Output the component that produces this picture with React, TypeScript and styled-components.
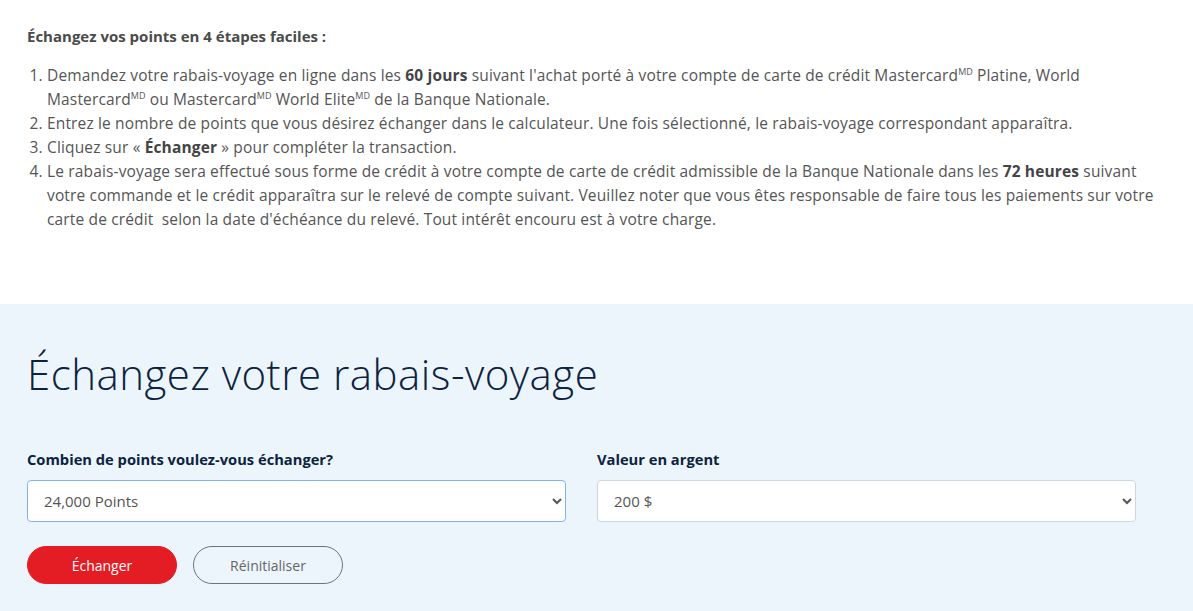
import React from "react";
import styled, { createGlobalStyle } from "styled-components";

const GlobalStyle = createGlobalStyle`
  body {
    margin: 0;
    background: #fff;
    font-family: "Open Sans", "Liberation Sans", sans-serif;
    color: #555;
  }
`;

const Intro = styled.section`
  padding: 26px 27px 73px;
`;

const IntroTitle = styled.h3`
  margin: 0 0 17px;
  font-size: 15px;
  font-weight: 700;
  color: #4a4a4a;
  line-height: 20px;
`;

const Steps = styled.ol`
  margin: 0;
  padding: 0 0 0 20px;
  font-size: 15.5px;
  letter-spacing: 0.15px;
  line-height: 24px;
  color: #555;

  b {
    font-weight: 700;
    color: #444;
  }

  sup {
    font-size: 9px;
    line-height: 0;
    vertical-align: 6px;
    letter-spacing: 0;
  }
`;

const Calculator = styled.section`
  background: #edf5fc;
  padding: 45px 27px 28px;
`;

const Title = styled.h2`
  margin: 0 0 50px;
  font-size: 42px;
  font-weight: 300;
  letter-spacing: 0.5px;
  line-height: 50px;
  color: #0c2340;
`;

const Fields = styled.div`
  display: grid;
  grid-template-columns: 539px 539px;
  column-gap: 31px;
`;

const Field = styled.label`
  display: flex;
  flex-direction: column;
  gap: 11px;
`;

const Label = styled.span`
  font-size: 14.7px;
  font-weight: 700;
  color: #0c2340;
  line-height: 20px;
`;

const Select = styled.select<{ $focused?: boolean }>`
  height: 42px;
  padding: 0 10px 0 12px;
  font-family: inherit;
  font-size: 15px;
  color: #555;
  background: #fff;
  border: 1px solid ${p => (p.$focused ? "#80b3ef" : "#cdd5df")};
  border-radius: 4px;
  outline: none;
`;

const Actions = styled.div`
  display: flex;
  gap: 16px;
  margin-top: 24px;
`;

const Button = styled.button<{ $primary?: boolean }>`
  width: 150px;
  height: 38px;
  border-radius: 19px;
  font-family: inherit;
  font-size: 14px;
  cursor: pointer;
  background: ${p => (p.$primary ? "#e41c23" : "transparent")};
  color: ${p => (p.$primary ? "#fff" : "#666")};
  border: 1px solid ${p => (p.$primary ? "#e41c23" : "#6b7480")};
`;

export default function App() {
  return (
    <>
      <GlobalStyle />
      <Intro>
        <IntroTitle>Échangez vos points en 4 étapes faciles :</IntroTitle>
        <Steps>
          <li>
            Demandez votre rabais-voyage en ligne dans les <b>60 jours</b> suivant l'achat porté à votre compte de carte de crédit Mastercard<sup>MD</sup> Platine, World Mastercard<sup>MD</sup> ou Mastercard<sup>MD</sup> World Elite<sup>MD</sup> de la Banque Nationale.
          </li>
          <li>
            Entrez le nombre de points que vous désirez échanger dans le calculateur. Une fois sélectionné, le rabais-voyage correspondant apparaîtra.
          </li>
          <li>
            Cliquez sur « <b>Échanger</b> » pour compléter la transaction.
          </li>
          <li>
            Le rabais-voyage sera effectué sous forme de crédit à votre compte de carte de crédit admissible de la Banque Nationale dans les <b>72 heures</b> suivant votre commande et le crédit apparaîtra sur le relevé de compte suivant. Veuillez noter que vous êtes responsable de faire tous les paiements sur votre carte de crédit&nbsp; selon la date d'échéance du relevé. Tout intérêt encouru est à votre charge.
          </li>
        </Steps>
      </Intro>
      <Calculator>
        <Title>Échangez votre rabais-voyage</Title>
        <Fields>
          <Field>
            <Label>Combien de points voulez-vous échanger?</Label>
            <Select $focused defaultValue="24000">
              <option value="24000">24,000 Points</option>
            </Select>
          </Field>
          <Field>
            <Label>Valeur en argent</Label>
            <Select defaultValue="200">
              <option value="200">200 $</option>
            </Select>
          </Field>
        </Fields>
        <Actions>
          <Button $primary>Échanger</Button>
          <Button>Réinitialiser</Button>
        </Actions>
      </Calculator>
    </>
  );
}
